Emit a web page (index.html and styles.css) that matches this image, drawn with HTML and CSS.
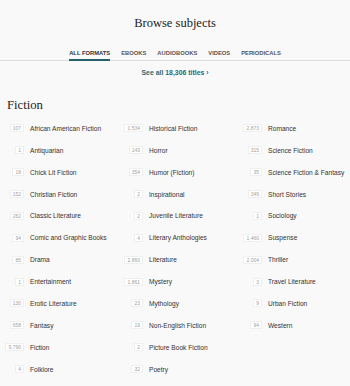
FILE: index.html
```html
<!DOCTYPE html>
<html lang="en">
<head>
    <meta charset="UTF-8">
    <meta name="viewport" content="width=device-width, initial-scale=1.0">
    <title>Browse subjects</title>
    <link rel="stylesheet" href="styles.css">
</head>
<body>
    <header class="page-head">
        <h1 class="title">Browse subjects</h1>
        <nav class="tabs">
            <a class="tab active" href="#">ALL FORMATS</a>
            <a class="tab" href="#">EBOOKS</a>
            <a class="tab" href="#">AUDIOBOOKS</a>
            <a class="tab" href="#">VIDEOS</a>
            <a class="tab" href="#">PERIODICALS</a>
        </nav>
        <a class="see-all" href="#">See all 18,306 titles ›</a>
    </header>

    <section class="subjects">
        <h2 class="group-title">Fiction</h2>
        <ul class="subject-list">
            <li><span class="count">107</span><a href="#">African American Fiction</a></li>
            <li><span class="count">1</span><a href="#">Antiquarian</a></li>
            <li><span class="count">18</span><a href="#">Chick Lit Fiction</a></li>
            <li><span class="count">152</span><a href="#">Christian Fiction</a></li>
            <li><span class="count">262</span><a href="#">Classic Literature</a></li>
            <li><span class="count">94</span><a href="#">Comic and Graphic Books</a></li>
            <li><span class="count">85</span><a href="#">Drama</a></li>
            <li><span class="count">1</span><a href="#">Entertainment</a></li>
            <li><span class="count">130</span><a href="#">Erotic Literature</a></li>
            <li><span class="count">658</span><a href="#">Fantasy</a></li>
            <li><span class="count">9,790</span><a href="#">Fiction</a></li>
            <li><span class="count">4</span><a href="#">Folklore</a></li>

            <li><span class="count">1,534</span><a href="#">Historical Fiction</a></li>
            <li><span class="count">143</span><a href="#">Horror</a></li>
            <li><span class="count">354</span><a href="#">Humor (Fiction)</a></li>
            <li><span class="count">2</span><a href="#">Inspirational</a></li>
            <li><span class="count">2</span><a href="#">Juvenile Literature</a></li>
            <li><span class="count">4</span><a href="#">Literary Anthologies</a></li>
            <li><span class="count">2,860</span><a href="#">Literature</a></li>
            <li><span class="count">1,861</span><a href="#">Mystery</a></li>
            <li><span class="count">23</span><a href="#">Mythology</a></li>
            <li><span class="count">19</span><a href="#">Non-English Fiction</a></li>
            <li><span class="count">2</span><a href="#">Picture Book Fiction</a></li>
            <li><span class="count">32</span><a href="#">Poetry</a></li>

            <li><span class="count">2,873</span><a href="#">Romance</a></li>
            <li><span class="count">315</span><a href="#">Science Fiction</a></li>
            <li><span class="count">35</span><a href="#">Science Fiction &amp; Fantasy</a></li>
            <li><span class="count">349</span><a href="#">Short Stories</a></li>
            <li><span class="count">1</span><a href="#">Sociology</a></li>
            <li><span class="count">1,460</span><a href="#">Suspense</a></li>
            <li><span class="count">2,004</span><a href="#">Thriller</a></li>
            <li><span class="count">3</span><a href="#">Travel Literature</a></li>
            <li><span class="count">9</span><a href="#">Urban Fiction</a></li>
            <li><span class="count">94</span><a href="#">Western</a></li>
        </ul>
    </section>
</body>
</html>
```

FILE: styles.css
```css
body {
    margin: 0;
    background-color: #f9f9f9;
    font-family: 'Liberation Sans', Arial, sans-serif;
    color: #333;
}
a {
    text-decoration: none;
    color: inherit;
}
.page-head {
    display: flex;
    flex-direction: column;
    align-items: center;
}
.title {
    margin: 15px 0 0;
    font-family: 'Liberation Serif', serif;
    font-weight: normal;
    font-size: 12.5px;
    line-height: 16px;
    color: #222;
}
.tabs {
    align-self: stretch;
    display: flex;
    justify-content: center;
    gap: 11px;
    margin-top: 17.5px;
    border-bottom: 1px solid #dcdcdc;
}
.tab {
    font-size: 5.8px;
    line-height: 8px;
    font-weight: bold;
    color: #555;
    padding-bottom: 2px;
    border-bottom: 2px solid transparent;
    margin-bottom: -1px;
}
.tab.active {
    color: #333;
    border-bottom-color: #24616a;
}
.see-all {
    margin-top: 7.5px;
    font-size: 6.9px;
    line-height: 9px;
    font-weight: bold;
    color: #2a6a73;
}
.group-title {
    margin: 19.5px 0 0 7px;
    font-family: 'Liberation Serif', serif;
    font-weight: normal;
    font-size: 12.7px;
    line-height: 16px;
    color: #222;
}
.subject-list {
    list-style: none;
    margin: 5px 0 0;
    padding: 0;
    display: grid;
    grid-auto-flow: column;
    grid-template-columns: repeat(3, 119px);
    grid-template-rows: repeat(12, 21.875px);
}
.subject-list li {
    display: grid;
    grid-template-columns: 24px auto;
    column-gap: 6px;
    align-items: center;
}
.count {
    justify-self: end;
    font-size: 5px;
    line-height: 6px;
    padding: 0 2px;
    color: #a0a0a0;
    background: #fff;
    border: 1px solid #efefef;
}
.subject-list a {
    font-size: 6.6px;
    line-height: 9px;
    color: #333;
    white-space: nowrap;
}
```
